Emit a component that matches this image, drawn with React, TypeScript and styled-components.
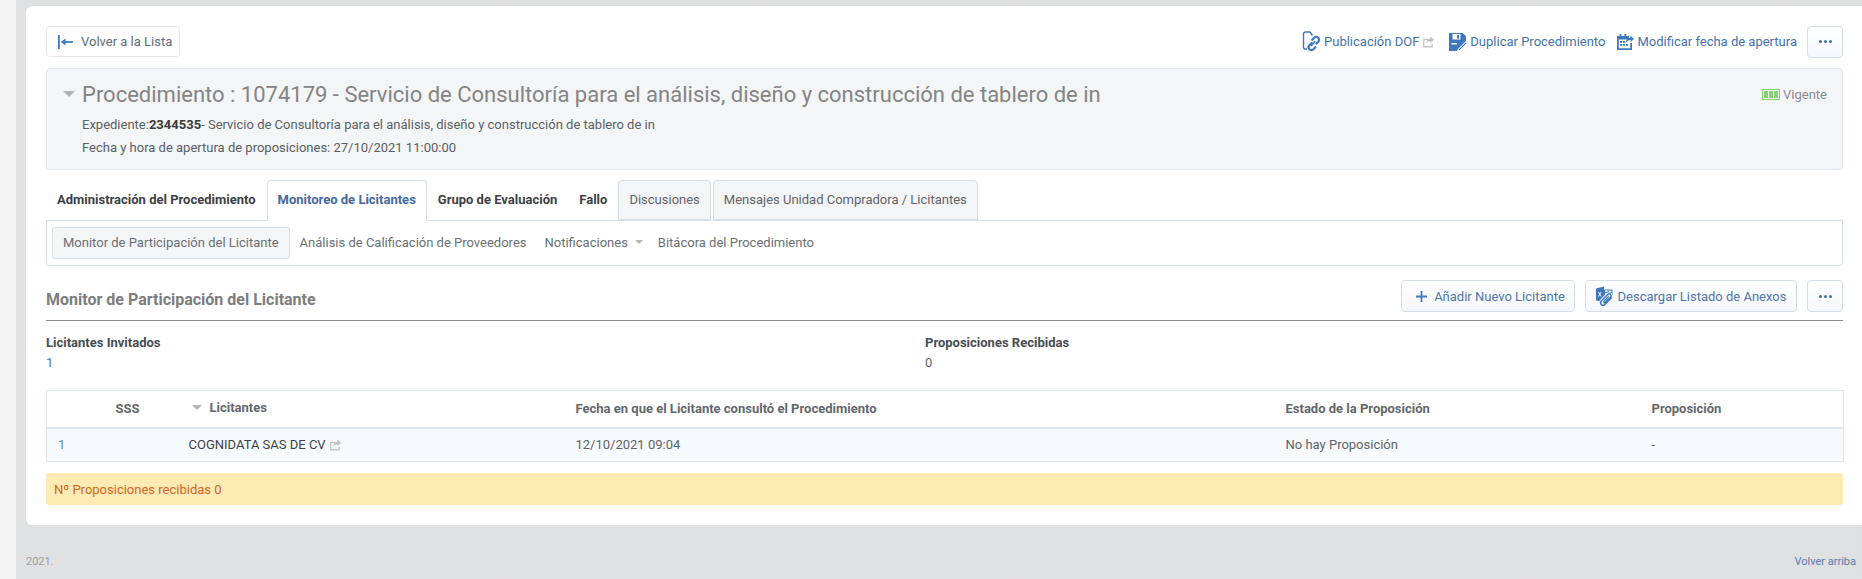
import React from 'react';
import { createGlobalStyle, styled } from 'styled-components';

const GlobalStyle = createGlobalStyle`
  html, body {
    margin: 0;
    padding: 0;
    height: 100%;
    overflow: hidden;
    background: #f3f3f3;
    font-family: Roboto, 'Liberation Sans', sans-serif;
    font-size: 13px;
    color: #5f6368;
  }
  * { box-sizing: border-box; }
`;

const Shell = styled.div`
  display: flex;
  height: 579px;
`;

const SideStrip = styled.div`
  width: 16px;
  flex: none;
  background: #f3f3f3;
`;

const Main = styled.div`
  flex: 1;
  min-width: 0;
  padding: 6px 0 0 10px;
  background-color: #dedfe1;
  background-image:
    repeating-linear-gradient(0deg, rgba(255, 255, 255, 0.06) 0 1px, transparent 1px 2px),
    repeating-linear-gradient(90deg, rgba(255, 255, 255, 0.06) 0 1px, transparent 1px 2px);
`;

const Card = styled.div`
  height: 519px;
  padding: 20px 19px 0 20px;
  background: #fff;
  border-radius: 6px 0 0 6px;
`;

const TopRow = styled.div`
  display: flex;
  align-items: center;
  justify-content: space-between;
  height: 31px;
`;

const BackButton = styled.button`
  display: flex;
  align-items: center;
  gap: 8px;
  width: 134px;
  height: 31px;
  padding: 0 0 0 11px;
  background: #fff;
  border: 1px solid #e4e8ec;
  border-radius: 4px;
  font: inherit;
  color: #5f6b76;
`;

const TopActions = styled.div`
  display: flex;
  align-items: center;
`;

const ActionLink = styled.a<{ $gap: number }>`
  display: flex;
  align-items: center;
  gap: 3px;
  margin-right: ${(p) => p.$gap}px;
  color: #4472ad;
  white-space: nowrap;
`;

const DotsButton = styled.button`
  display: flex;
  align-items: center;
  justify-content: center;
  gap: 2px;
  width: 36px;
  height: 32px;
  padding: 0;
  background: linear-gradient(#fff, #f5f8fc);
  border: 1px solid #d5dde6;
  border-radius: 4px;
`;

const Dot = styled.span`
  width: 3px;
  height: 3px;
  border-radius: 50%;
  background: #3f6ea8;
`;

const HeaderPanel = styled.div`
  height: 102px;
  margin-top: 11px;
  padding: 11px 15px 0 16px;
  background: #f3f5f7;
  border: 1px solid #e0e6eb;
  border-radius: 4px;
`;

const TitleRow = styled.div`
  display: flex;
  align-items: center;
  height: 28px;
`;

const Caret = styled.span<{ $w: number; $color?: string }>`
  flex: none;
  width: 0;
  height: 0;
  border-left: ${(p) => p.$w}px solid transparent;
  border-right: ${(p) => p.$w}px solid transparent;
  border-top: ${(p) => p.$w}px solid ${(p) => p.$color || '#b4b4b4'};
`;

const NavCaret = styled(Caret)`
  margin-right: -3px;
`;

const Title = styled.h1`
  flex: 1;
  margin: 0 0 0 7px;
  font-size: 22px;
  font-weight: 400;
  color: #848484;
  white-space: nowrap;
`;

const Status = styled.div`
  display: flex;
  align-items: center;
  gap: 3px;
  color: #8a8a8a;
  font-size: 13px;
`;

const Battery = styled.span`
  display: flex;
  gap: 1px;
  width: 18px;
  height: 11px;
  padding: 1px;
  border: 1px solid #85d272;
`;

const BatteryCell = styled.span`
  flex: 1;
  background: #85d272;
`;

const InfoLine = styled.div`
  height: 23px;
  padding-left: 19px;
  line-height: 23px;
  color: #5a5f65;
  font-size: 13px;
  b {
    color: #3a3a3a;
    font-weight: 700;
  }
`;

const InfoBlock = styled.div`
  margin-top: 5px;
`;

const TabBar = styled.div`
  display: flex;
  align-items: flex-end;
  height: 40px;
  margin-top: 10px;
  position: relative;
`;

const Tab = styled.div<{ $variant?: 'active' | 'boxed'; $ml?: number }>`
  display: flex;
  align-items: center;
  height: ${(p) => (p.$variant === 'active' ? '41px' : '40px')};
  margin-left: ${(p) => p.$ml ?? 0}px;
  margin-bottom: ${(p) => (p.$variant === 'active' ? '-1px' : '0')};
  padding: 0 10px 2px;
  white-space: nowrap;
  font-size: 13px;
  font-weight: ${(p) => (p.$variant === 'boxed' ? 400 : 700)};
  color: ${(p) => (p.$variant === 'active' ? '#44699c' : p.$variant === 'boxed' ? '#5f6368' : '#3e4044')};
  background: ${(p) => (p.$variant === 'active' ? '#fff' : p.$variant === 'boxed' ? '#f3f5f7' : 'transparent')};
  border: 1px solid ${(p) => (p.$variant ? '#d5dfe8' : 'transparent')};
  border-bottom: ${(p) => (p.$variant === 'active' ? '1px solid #fff' : undefined)};
  border-radius: 4px 4px 0 0;
  position: relative;
  z-index: 1;
`;

const SubNav = styled.div`
  display: flex;
  align-items: center;
  height: 46px;
  padding-left: 5px;
  background: #fff;
  border: 1px solid #d5dfe8;
  border-radius: 0 0 4px 4px;
`;

const SubItem = styled.div<{ $active?: boolean }>`
  display: flex;
  align-items: center;
  gap: 7px;
  height: 32px;
  margin-right: ${(p) => (p.$active ? '1px' : '0')};
  padding: 0 ${(p) => (p.$active ? '10px' : '8px')} 2px;
  color: #6a7076;
  white-space: nowrap;
  font-size: 13px;
  background: ${(p) => (p.$active ? '#f3f5f7' : 'transparent')};
  border: 1px solid ${(p) => (p.$active ? '#d5dfe8' : 'transparent')};
  border-radius: 3px;
`;

const SectionHead = styled.div`
  display: flex;
  align-items: flex-start;
  justify-content: space-between;
  height: 41px;
  margin-top: 14px;
  border-bottom: 1.5px solid #8b8b8b;
`;

const SectionTitle = styled.h2`
  margin: 10px 0 0;
  font-size: 16px;
  font-weight: 700;
  color: #7d7d7d;
`;

const SectionActions = styled.div`
  display: flex;
  gap: 10px;
`;

const OutlineButton = styled.button<{ $w: number }>`
  display: flex;
  align-items: center;
  justify-content: center;
  gap: 4px;
  width: ${(p) => p.$w}px;
  height: 32px;
  padding: 0;
  background: linear-gradient(#fff, #f4f7fc);
  border: 1px solid #d5dde6;
  border-radius: 4px;
  font: inherit;
  color: #4f75a8;
  white-space: nowrap;
`;

const Stats = styled.div`
  display: grid;
  grid-template-columns: 879px 1fr;
  height: 69px;
  padding-top: 12px;
`;

const StatLabel = styled.div`
  height: 20px;
  line-height: 20px;
  font-weight: 700;
  color: #484c52;
  font-size: 13px;
`;

const StatValue = styled.div<{ $link?: boolean }>`
  height: 20px;
  line-height: 20px;
  color: ${(p) => (p.$link ? '#3f78b5' : '#5f6368')};
`;

const Table = styled.table`
  width: 100%;
  table-layout: fixed;
  border-collapse: collapse;
  border: 1px solid #dde6ee;
`;

const HeadCell = styled.th`
  height: 37px;
  padding: 0 12px;
  text-align: left;
  font-size: 13px;
  font-weight: 700;
  color: #63676d;
  background: #fff;
  border-bottom: 2px solid #dde6ee;
`;

const SortLabel = styled.span`
  display: flex;
  align-items: center;
  gap: 8px;
  padding-left: 3px;
  margin-top: -2px;
`;

const Cell = styled.td<{ $link?: boolean; $dark?: boolean }>`
  height: 34px;
  padding: 0 12px;
  background: #f6fafd;
  color: ${(p) => (p.$link ? '#5b87b0' : p.$dark ? '#3c4046' : '#5f6368')};
`;

const IndexCell = styled(Cell)`
  padding-left: 11px;
`;

const Alert = styled.div`
  display: flex;
  align-items: center;
  height: 32px;
  margin-top: 11px;
  padding-left: 8px;
  background: #feebb4;
  border-radius: 3px;
  color: #d2641f;
`;

const Footer = styled.div`
  display: flex;
  justify-content: space-between;
  padding: 30px 6px 0 0;
  font-size: 11px;
`;

const FooterYear = styled.span`
  color: #a0a0a0;
`;

const FooterLink = styled.a`
  color: #5b7cab;
`;

const ExternalSvg = styled.svg`
  flex: none;
  vertical-align: -2px;
`;

const PlusSvg = styled.svg`
  margin: 0 3px 0 5px;
`;

const ExternalIcon: React.FC = () => (
  <ExternalSvg width="13" height="12" viewBox="0 0 12 11">
    <path d="M1 2.500h5v1.200H2.200v5.600h6.600V7H10v3.500H1z" fill="#c4c4c4" />
    <path d="M7.500 0.500 11.500 3.500 7.500 6.500V4.800C5.800 4.800 4.600 5.500 3.900 7c0-2.600 1.400-4.300 3.600-4.600z" fill="#c4c4c4" />
  </ExternalSvg>
);

const BackIcon: React.FC = () => (
  <svg width="15" height="14" viewBox="0 0 15 14">
    <rect x="0" y="0" width="1.800" height="14" fill="#3f78c0" />
    <path d="M15 7H4" stroke="#3f78c0" strokeWidth="1.800" />
    <path d="M2.800 7 7.500 3.500v7z" fill="#3f78c0" />
  </svg>
);

const DofIcon: React.FC = () => (
  <svg width="19" height="21" viewBox="0 0 19 21">
    <path d="M8 1H3.500C2.400 1 1.500 1.900 1.500 3v13c0 1.100.9 2 2 2H5" fill="none" stroke="#3f78c0" strokeWidth="1.400" />
    <path d="M8 1l2.500 3.500" fill="none" stroke="#3f78c0" strokeWidth="1.400" />
    <path d="M9.500 9.500l2.600-2.800c1.100-1.100 3-1.100 4.100 0s1.100 2.900 0 4l-2.300 2.300" fill="none" stroke="#3f78c0" strokeWidth="2.200" />
    <path d="M10.200 11.500l-2.800 2.700c-1.100 1.100-1.100 2.900 0 4s3 1.100 4.100 0l2.500-2.600" fill="none" stroke="#3f78c0" strokeWidth="2.200" />
    <path d="M8.800 14.800l4.400-4.400" stroke="#3f78c0" strokeWidth="1.800" />
  </svg>
);

const SaveEditIcon: React.FC = () => (
  <svg width="18" height="18" viewBox="0 0 18 18">
    <path d="M0 0h13.500L17 3v5l-8 8-1 2H0z" fill="#3f78c0" />
    <rect x="3.500" y="1" width="8" height="5.500" fill="#fff" />
    <rect x="8" y="2" width="2" height="3.500" fill="#3f78c0" />
    <rect x="2.500" y="10" width="5.500" height="1.500" fill="#fff" />
    <path d="M9.500 16.500l-.8 1.500 2-.5 7-7-1.300-1.300z" fill="#3f78c0" stroke="#fff" strokeWidth="0.800" />
  </svg>
);

const CalendarIcon: React.FC = () => (
  <svg width="18" height="18" viewBox="0 0 18 18">
    <path d="M1 3h10v2H2.800v10.200h11.400V10H16v7H1z" fill="#3f78c0" />
    <rect x="1" y="3" width="12" height="3.500" fill="#3f78c0" />
    <rect x="3.500" y="1" width="1.800" height="3" fill="#3f78c0" />
    <rect x="8.500" y="1" width="1.800" height="3" fill="#3f78c0" />
    <path d="M4 8h2.200v1.800H4zM7 8h2v1.800H7zM4 11h2.200v1.800H4zM7 11h2v1.800H7zM10 11h2v1.800h-2z" fill="#3f78c0" />
    <path d="M9.500 10c.2-3 2.200-5 5-5.300V2.500L18 6l-3.500 3V7c-2 0-3.600 1-5 3z" fill="#3f78c0" />
  </svg>
);

const PlusIcon: React.FC = () => (
  <PlusSvg width="11" height="11" viewBox="0 0 11 11">
    <path d="M5.500 0v11M0 5.500h11" stroke="#3f78c0" strokeWidth="1.800" />
  </PlusSvg>
);

const CLIP_PATH =
  'M15.800 11.500 9.200 18.200c-1.300 1.300-3.200 1.300-4 .3s-.8-2.800.5-4l6-6c.9-.9 2.300-.9 3 0s.7 2-.2 2.900l-5 5c-.5.5-1.200.5-1.500.1s-.3-1 .2-1.500l4-4';

const ExcelClipIcon: React.FC = () => (
  <svg width="18" height="21" viewBox="0 0 18 21">
    <path d="M0 2.500 8 .5v15.500L0 14.500z" fill="#3f78c0" />
    <path d="M2.500 6 5 10.500M5 6 2.500 10.500" stroke="#fff" strokeWidth="0.900" />
    <path d="M8.500 4h7.500v7H8.500zM8.500 6.500H16M12.200 4v7" fill="none" stroke="#3f78c0" strokeWidth="1" />
    <path d={CLIP_PATH} fill="none" stroke="#fff" strokeWidth="3.200" />
    <path d={CLIP_PATH} fill="none" stroke="#3f78c0" strokeWidth="1.500" />
  </svg>
);

const Dots: React.FC = () => (
  <>
    <Dot />
    <Dot />
    <Dot />
  </>
);

const App: React.FC = () => {
  const batteryCells = [0, 1, 2];
  const columns = [57, 73, 387, 710, 366, 204];

  return (
    <>
      <GlobalStyle />
      <Shell>
        <SideStrip />
        <Main>
          <Card>
            <TopRow>
              <BackButton>
                <BackIcon />
                Volver a la Lista
              </BackButton>
              <TopActions>
                <ActionLink $gap={14}>
                  <DofIcon />
                  Publicación DOF
                  <ExternalIcon />
                </ActionLink>
                <ActionLink $gap={11}>
                  <SaveEditIcon />
                  Duplicar Procedimiento
                </ActionLink>
                <ActionLink $gap={10}>
                  <CalendarIcon />
                  Modificar fecha de apertura
                </ActionLink>
                <DotsButton>
                  <Dots />
                </DotsButton>
              </TopActions>
            </TopRow>

            <HeaderPanel>
              <TitleRow>
                <Caret $w={6} />
                <Title>Procedimiento : 1074179 - Servicio de Consultoría para el análisis, diseño y construcción de tablero de in</Title>
                <Status>
                  <Battery>
                    {batteryCells.map((c) => (
                      <BatteryCell key={c} />
                    ))}
                  </Battery>
                  Vigente
                </Status>
              </TitleRow>
              <InfoBlock>
                <InfoLine>
                  Expediente:<b>2344535</b>- Servicio de Consultoría para el análisis, diseño y construcción de tablero de in
                </InfoLine>
                <InfoLine>Fecha y hora de apertura de proposiciones: 27/10/2021 11:00:00</InfoLine>
              </InfoBlock>
            </HeaderPanel>

            <TabBar>
              <Tab>Administración del Procedimiento</Tab>
              <Tab $variant="active">Monitoreo de Licitantes</Tab>
              <Tab>Grupo de Evaluación</Tab>
              <Tab>Fallo</Tab>
              <Tab $variant="boxed">Discusiones</Tab>
              <Tab $variant="boxed" $ml={2}>
                Mensajes Unidad Compradora / Licitantes
              </Tab>
            </TabBar>
            <SubNav>
              <SubItem $active>Monitor de Participación del Licitante</SubItem>
              <SubItem>Análisis de Calificación de Proveedores</SubItem>
              <SubItem>
                Notificaciones
                <NavCaret $w={4} />
              </SubItem>
              <SubItem>Bitácora del Procedimiento</SubItem>
            </SubNav>

            <SectionHead>
              <SectionTitle>Monitor de Participación del Licitante</SectionTitle>
              <SectionActions>
                <OutlineButton $w={174}>
                  <PlusIcon />
                  Añadir Nuevo Licitante
                </OutlineButton>
                <OutlineButton $w={212}>
                  <ExcelClipIcon />
                  Descargar Listado de Anexos
                </OutlineButton>
                <DotsButton>
                  <Dots />
                </DotsButton>
              </SectionActions>
            </SectionHead>

            <Stats>
              <div>
                <StatLabel>Licitantes Invitados</StatLabel>
                <StatValue $link>1</StatValue>
              </div>
              <div>
                <StatLabel>Proposiciones Recibidas</StatLabel>
                <StatValue>0</StatValue>
              </div>
            </Stats>

            <Table>
              <colgroup>
                {columns.map((w, i) => (
                  <col key={i} style={{ width: w }} />
                ))}
              </colgroup>
              <thead>
                <tr>
                  <HeadCell />
                  <HeadCell>SSS</HeadCell>
                  <HeadCell>
                    <SortLabel>
                      <Caret $w={5} />
                      Licitantes
                    </SortLabel>
                  </HeadCell>
                  <HeadCell>Fecha en que el Licitante consultó el Procedimiento</HeadCell>
                  <HeadCell>Estado de la Proposición</HeadCell>
                  <HeadCell>Proposición</HeadCell>
                </tr>
              </thead>
              <tbody>
                <tr>
                  <IndexCell $link>1</IndexCell>
                  <Cell />
                  <Cell $dark>
                    COGNIDATA SAS DE CV <ExternalIcon />
                  </Cell>
                  <Cell>12/10/2021 09:04</Cell>
                  <Cell>No hay Proposición</Cell>
                  <Cell>-</Cell>
                </tr>
              </tbody>
            </Table>

            <Alert>Nº Proposiciones recibidas 0</Alert>
          </Card>
          <Footer>
            <FooterYear>2021.</FooterYear>
            <FooterLink>Volver arriba</FooterLink>
          </Footer>
        </Main>
      </Shell>
    </>
  );
};

export default App;
